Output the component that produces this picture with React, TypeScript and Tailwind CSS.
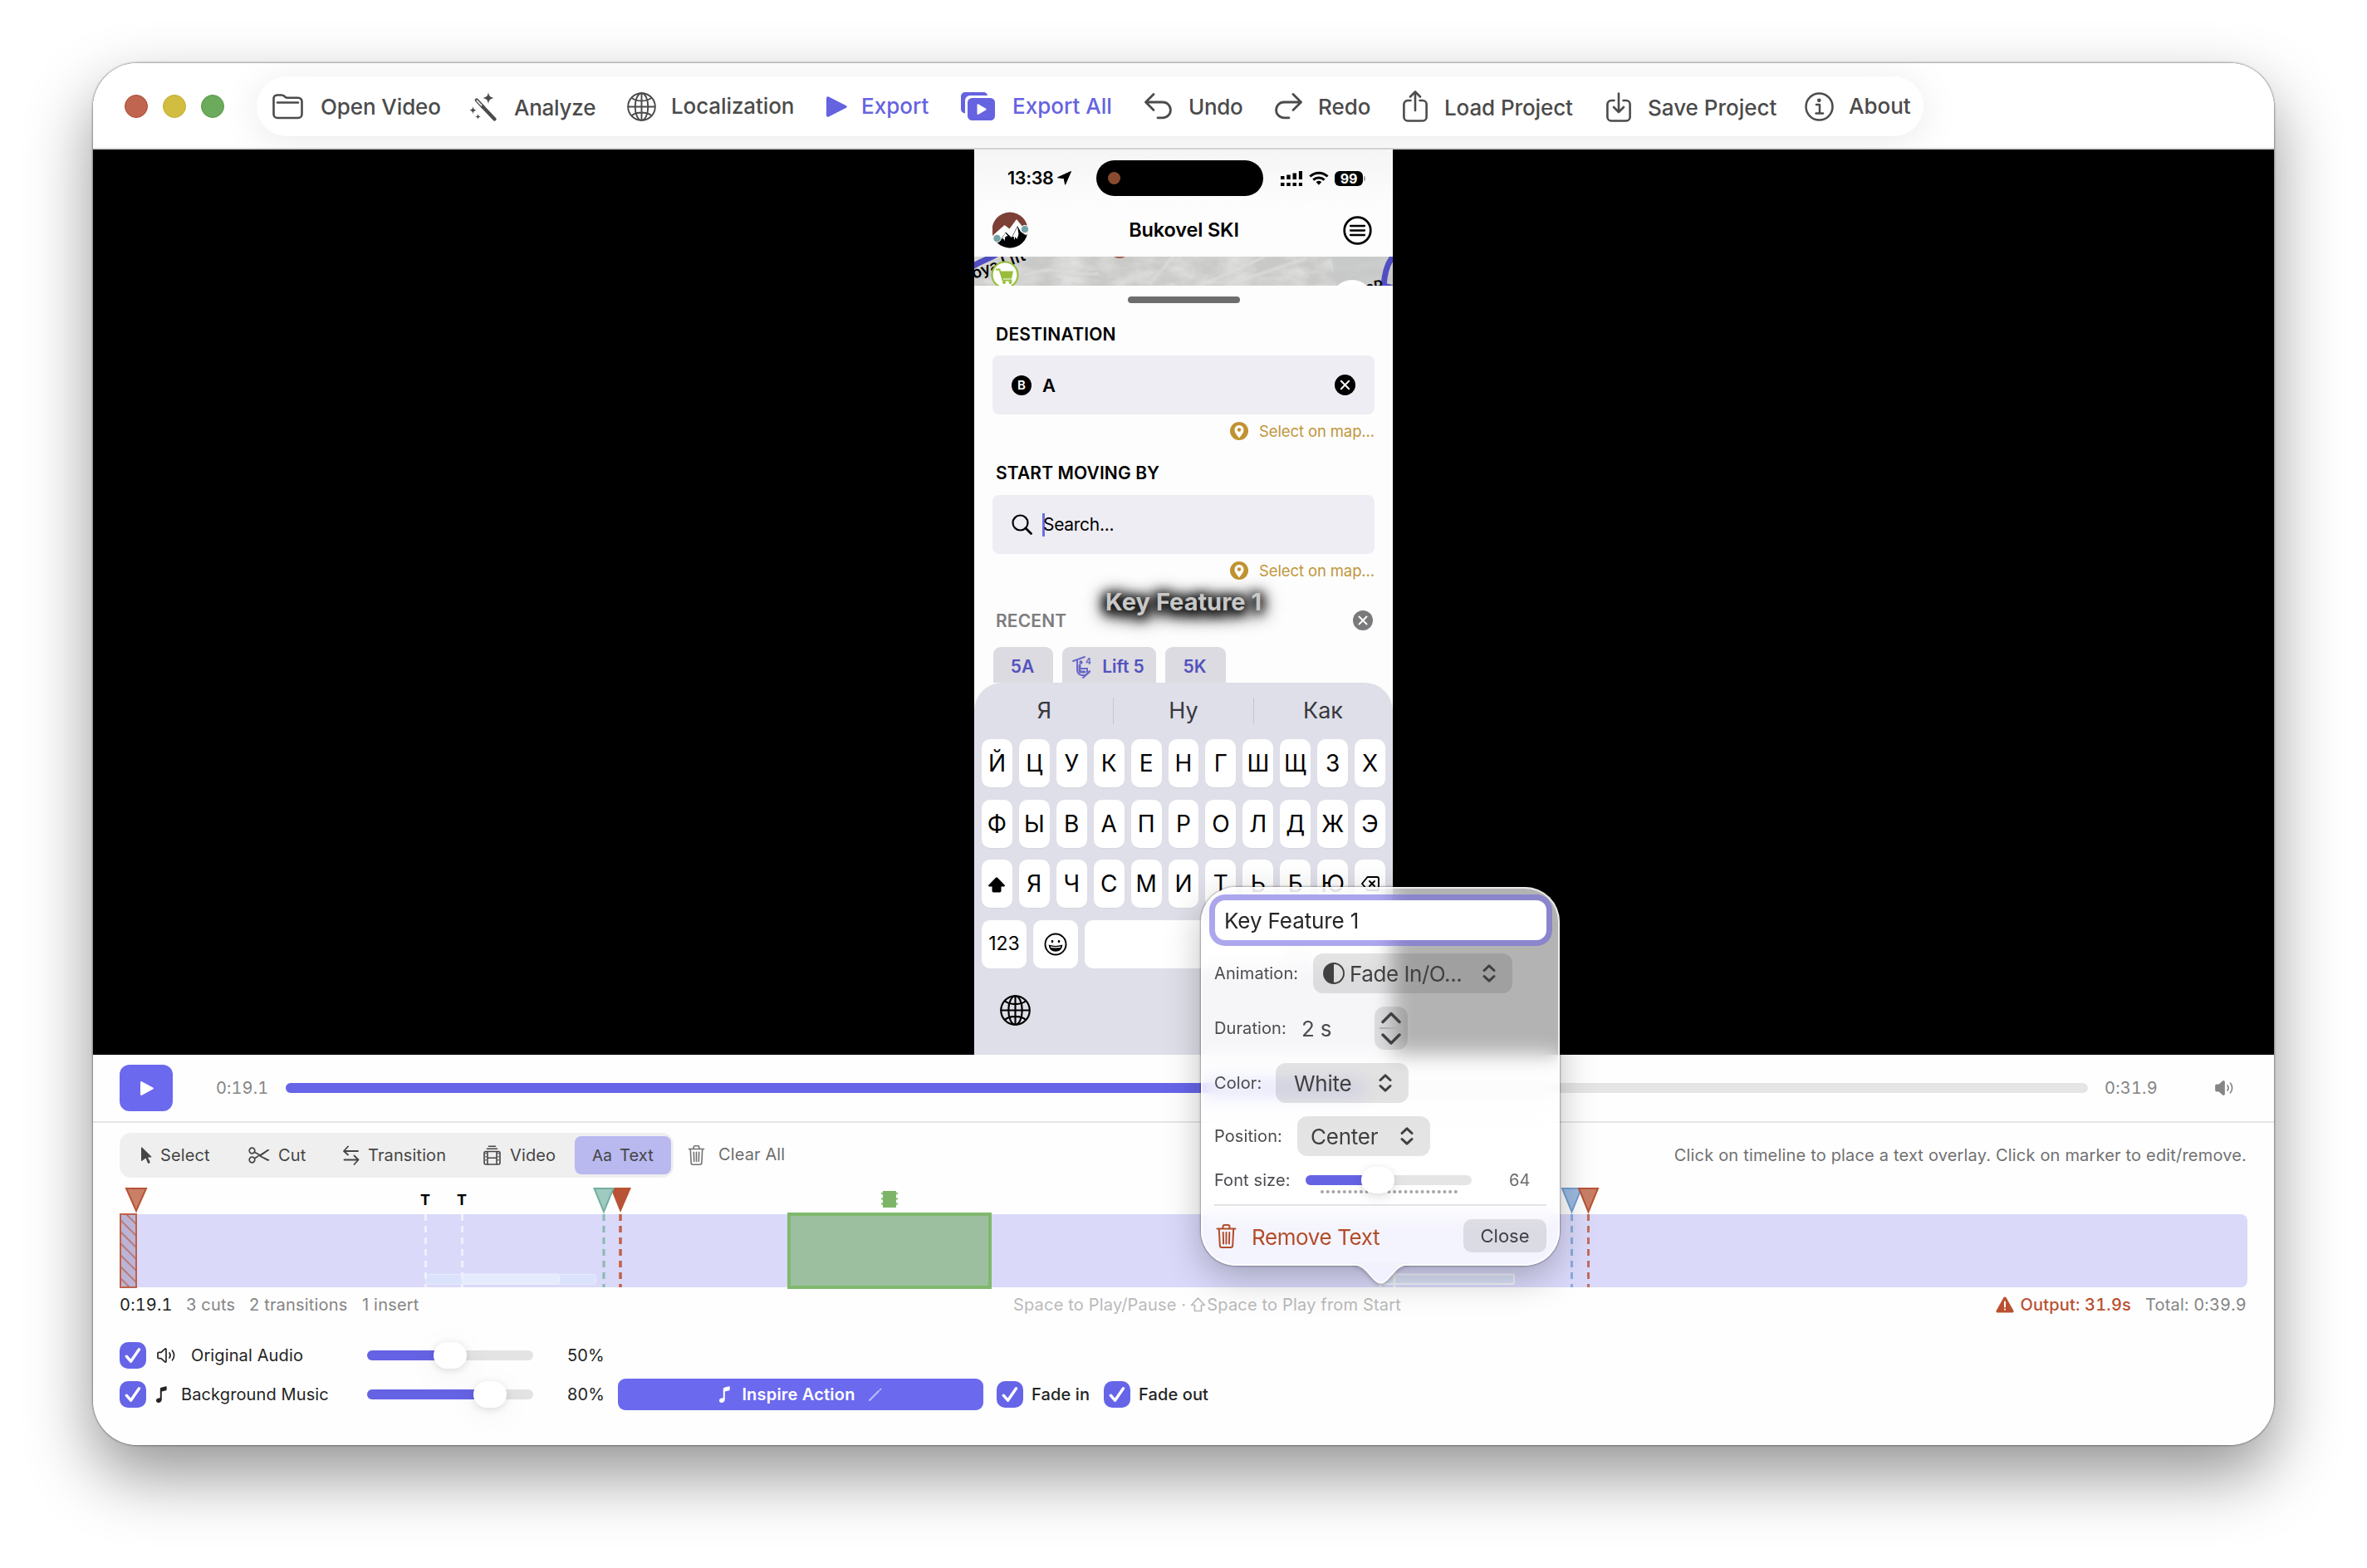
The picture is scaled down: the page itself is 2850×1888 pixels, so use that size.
import type { ReactNode } from "react";
import clsx from "clsx";

function Globe({ size, stroke }: { size: number; stroke: number }) {
    return (
        <svg width={size} height={size} viewBox="0 0 36 36" fill="none" stroke="currentColor" strokeWidth={stroke}>
            <circle cx="18" cy="18" r="16.8" />
            <ellipse cx="18" cy="18" rx="8" ry="16.8" />
            <path d="M18 1v34M1 18h34M5.5 6.8c3 2.6 7.5 4 12.5 4s9.5-1.4 12.5-4M5.5 29.2c3-2.6 7.5-4 12.5-4s9.5 1.4 12.5 4" />
        </svg>
    );
}

function FolderIcon() {
    return (
        <svg width="37" height="31" viewBox="0 0 37 31" fill="none" stroke="currentColor" strokeWidth="2.6" strokeLinecap="round" strokeLinejoin="round">
            <path d="M1.5 24.5V5.5a4 4 0 0 1 4-4h5.5c1.5 0 2.3.4 3.3 1.3l1 .9c.8.7 1.5 1 2.7 1h13a4.5 4.5 0 0 1 4.5 4.5v15.3a4.5 4.5 0 0 1-4.5 4.5H6a4.5 4.5 0 0 1-4.5-4.5z" />
            <path d="M6 10.5h25" />
        </svg>
    );
}

function WandIcon() {
    return (
        <svg width="34" height="35" viewBox="0 0 34 35" fill="currentColor">
            <path d="M23 0c.7 4.5 2 6 6.5 7-4.5 1-5.8 2.5-6.5 7-.7-4.5-2-6-6.5-7 4.5-1 5.8-2.5 6.5-7zM4.5 17c.4 3 1.3 4 4.3 4.7-3 .7-3.9 1.7-4.3 4.7-.4-3-1.3-4-4.3-4.7 3-.7 3.9-1.7 4.3-4.7zM10.5 26c.3 2.2 1 3 3.2 3.5-2.2.5-2.9 1.3-3.2 3.5-.3-2.2-1-3-3.2-3.5 2.2-.5 2.9-1.3 3.2-3.5z" />
            <path d="M8.8 9.5l8 8.5" fill="none" stroke="currentColor" strokeWidth="4.4" strokeLinecap="round" />
            <path d="M9.3 10.2l6.5 6.8" fill="none" stroke="#fff" strokeWidth="1.6" strokeLinecap="round" />
            <path d="M16.5 17.7l14 14.8" fill="none" stroke="currentColor" strokeWidth="4.2" strokeLinecap="round" />
        </svg>
    );
}

function PlayIcon({ w, h }: { w: number; h: number }) {
    return (
        <svg width={w} height={h} viewBox="0 0 25 24" fill="currentColor" preserveAspectRatio="none">
            <path d="M0 2.2C0 .6 1.4-.3 2.8.4L23.6 10.6c1.6.8 1.6 2 0 2.8L2.8 23.6C1.4 24.3 0 23.4 0 21.8z" />
        </svg>
    );
}

function ExportAllIcon() {
    return (
        <svg width="41" height="34" viewBox="0 0 41 34" fill="currentColor">
            <path d="M5 25.5a5 5 0 0 1-5-5V5a5 5 0 0 1 5-5h22a5 5 0 0 1 5 4H11a6 6 0 0 0-6 6z" />
            <rect x="8" y="7" width="33" height="27" rx="5.5" />
            <path d="M19.5 15.3c0-1 .8-1.4 1.6-.9l9 5.3c.8.5.8 1.2 0 1.7l-9 5.3c-.8.5-1.6.1-1.6-.9z" fill="#fff" />
        </svg>
    );
}

function UndoIcon({ flip }: { flip?: boolean }) {
    return (
        <svg width="33" height="32" viewBox="0 0 33 32" fill="none" stroke="currentColor" strokeWidth="2.8" strokeLinecap="round" strokeLinejoin="round" className={clsx(flip && "-scale-x-100")}>
            <path d="M11 1.5L1.5 11l9.5 9.5M2 11h20a9.2 9.2 0 0 1 0 18.8h-6" />
        </svg>
    );
}

function TrayIcon({ down }: { down?: boolean }) {
    return (
        <svg width="30" height="38" viewBox="0 0 30 38" fill="none" stroke="currentColor" strokeWidth="2.6" strokeLinecap="round" strokeLinejoin="round">
            <path d="M9.5 12H6a4.6 4.6 0 0 0-4.6 4.6V32A4.6 4.6 0 0 0 6 36.5h18a4.6 4.6 0 0 0 4.6-4.5V16.6A4.6 4.6 0 0 0 24 12h-3.5" />
            {down ? <path d="M15 3.5V26M9 20l6 6 6-6" /> : <path d="M15 24V1.5M9 7.5l6-6 6 6" />}
        </svg>
    );
}

function InfoIcon() {
    return (
        <svg width="35" height="35" viewBox="0 0 35 35" fill="none" stroke="currentColor" strokeWidth="2.5" strokeLinecap="round" strokeLinejoin="round">
            <circle cx="17.5" cy="17.5" r="16" />
            <path d="M14 15h4v10M13.5 25.5h8.5" />
            <circle cx="17.3" cy="9.8" r="1.1" fill="currentColor" />
        </svg>
    );
}

function Trash({ w, h, stroke }: { w: number; h: number; stroke: number }) {
    return (
        <svg width={w} height={h} viewBox="0 0 24 29" fill="none" stroke="currentColor" strokeWidth={stroke} strokeLinecap="round" strokeLinejoin="round">
            <path d="M1 5.5h22M8 5V3a2 2 0 0 1 2-2h4a2 2 0 0 1 2 2v2M3.3 6l1 19.5A2.5 2.5 0 0 0 6.8 28h10.4a2.5 2.5 0 0 0 2.5-2.5L20.7 6M8.2 10l.4 13.5M12 10v13.5M15.8 10l-.4 13.5" />
        </svg>
    );
}

function Speaker({ filled }: { filled?: boolean }) {
    return (
        <svg width="24" height="18" viewBox="0 0 24 18" fill="none" stroke="currentColor" strokeWidth="1.7" strokeLinecap="round" strokeLinejoin="round">
            <path d="M1 6.5a1.2 1.2 0 0 1 1.2-1.2H5L9.7 1.2c.6-.5 1.3-.2 1.3.6v14.4c0 .8-.7 1.1-1.3.6L5 12.7H2.2A1.2 1.2 0 0 1 1 11.5z" fill={filled ? "currentColor" : "none"} />
            <path d="M15 6c1.3 1.8 1.3 4.2 0 6M18.5 3.2c2.8 3.3 2.8 8.3 0 11.6" />
        </svg>
    );
}

function Note({ h }: { h: number }) {
    return (
        <svg width={(h * 13) / 20} height={h} viewBox="0 0 13 20" fill="currentColor">
            <path d="M4.8 3.2c0-.8.4-1.3 1.2-1.5L11.7.2c.6-.2 1 .1 1 .7v3.3c0 .6-.3.9-.9 1.1l-5 1.2v9.2c0 2.6-1.6 4.2-4 4.2C1.1 19.9 0 18.9 0 17.5c0-1.5 1-2.5 2.7-2.9l1.1-.2c.7-.2 1-.5 1-1.2z" />
        </svg>
    );
}

function Updown() {
    return (
        <svg width="16" height="22" viewBox="0 0 16 22" fill="none" stroke="currentColor" strokeWidth="3" strokeLinecap="round" strokeLinejoin="round">
            <path d="M2 7.5l6-5.7 6 5.7M2 14.5l6 5.7 6-5.7" />
        </svg>
    );
}

function CircleX({ size, color }: { size: number; color: string }) {
    return (
        <svg width={size} height={size} viewBox="0 0 24 24">
            <circle cx="12" cy="12" r="12" fill={color} />
            <path d="M7.5 7.5l9 9m0-9l-9 9" stroke="#fff" strokeWidth="1.9" strokeLinecap="round" />
        </svg>
    );
}

function Checkbox() {
    return (
        <span className="flex size-8 shrink-0 items-center justify-center rounded-[10px] bg-[#6665e8]">
            <svg width="20" height="20" viewBox="0 0 20 20" fill="none" stroke="#fff" strokeWidth="3.4" strokeLinecap="round" strokeLinejoin="round">
                <path d="M2.3 11.2l5.2 6L17.5 2.8" />
            </svg>
        </span>
    );
}

const toolbar: { label: string; w: string; slot: string; text: string; accent?: boolean; icon: ReactNode }[] = [
    { label: "Open Video", w: "w-[237px]", slot: "w-[58px]", text: "tracking-[-0.1px] pt-[2px]", icon: <FolderIcon /> },
    { label: "Analyze", w: "w-[190px]", slot: "w-[54px]", text: "tracking-[-0.25px] pt-[3px]", icon: <WandIcon /> },
    { label: "Localization", w: "w-[240px]", slot: "w-[53px]", text: "tracking-[-0.1px]", icon: <Globe size={35} stroke={2} /> },
    { label: "Export", w: "w-[162px]", slot: "w-[42px]", text: "", accent: true, icon: <PlayIcon w={25} h={25} /> },
    { label: "Export All", w: "w-[221px]", slot: "w-[62px]", text: "", accent: true, icon: <ExportAllIcon /> },
    { label: "Undo", w: "w-[157px]", slot: "w-[53px]", text: "tracking-[-0.3px] pt-[2px]", icon: <UndoIcon /> },
    { label: "Redo", w: "w-[154px]", slot: "w-[52px]", text: "pt-[2px]", icon: <UndoIcon flip /> },
    { label: "Load Project", w: "w-[245px]", slot: "w-[50px]", text: "tracking-[-0.1px] pt-[4px]", icon: <TrayIcon /> },
    { label: "Save Project", w: "w-[239px]", slot: "w-[50px]", text: "pt-[3px]", icon: <TrayIcon down /> },
    { label: "About", w: "w-[143px]", slot: "w-[53px]", text: "", icon: <InfoIcon /> },
];

function TitleBar() {
    return (
        <div className="flex h-[104px] shrink-0 items-center border-b-2 border-[#d9d9d9] bg-white pl-[38px]">
            <div className="mt-px flex gap-[18px]">
                <span className="size-7 rounded-full border border-[#ab4a35] bg-[#c0654f]" />
                <span className="size-7 rounded-full border border-[#c4ad2e] bg-[#d1bd40]" />
                <span className="size-7 rounded-full border border-[#559847] bg-[#6bab5b]" />
            </div>
            <div className="ml-[39px] mt-[2px] flex h-[72px] w-[2007px] items-center rounded-full bg-white pl-[19px] text-[26px] leading-none font-medium text-[#4b4b4b] shadow-[0_6px_48px_rgba(0,0,0,0.09)]">
                {toolbar.map((item) => (
                    <div key={item.label} className={clsx("flex shrink-0 items-center", item.w, item.accent && "text-[#6563e0]")}>
                        <span className={clsx("shrink-0", item.slot)}>{item.icon}</span>
                        <span className={clsx("whitespace-nowrap", item.text)}>{item.label}</span>
                    </div>
                ))}
            </div>
        </div>
    );
}

function StatusBar() {
    return (
        <div className="flex h-[70px] items-center pb-px pl-10 pr-[33px]">
            <span className="w-[60px] text-[21.5px] leading-none font-semibold tracking-[-0.3px]">13:38</span>
            <svg width="17" height="17" viewBox="0 0 17 17">
                <path d="M16.6.4L9.6 16.3 8.3 8.8.4 7.8z" fill="#000" stroke="#000" strokeLinejoin="round" />
            </svg>
            <div className="ml-[30px] flex h-[43px] w-[202px] items-center rounded-full bg-black pl-[14px]">
                <span className="size-[15px] rounded-full bg-[#8a4a2f]" />
            </div>
            <svg className="ml-[21px]" width="27" height="18" viewBox="0 0 27 18">
                <path d="M0 14h4.5v4H0zM7.3 14h4.5v4H7.3zM14.6 14h4.5v4h-4.5zM22 14h4.5v4H22zM0 6h4.5v4H0zM7.3 4.5h4.5V10H7.3zM14.6 2.5h4.5V10h-4.5zM22 0h4.5v10H22z" />
            </svg>
            <svg className="ml-2" width="24" height="17" viewBox="0 0 24 17" fill="none" stroke="#000" strokeWidth="3">
                <path d="M1.3 6.5a15.5 15.5 0 0 1 21.4 0M5.3 10.7a9.8 9.8 0 0 1 13.4 0" />
                <path d="M12 16.8l-3.3-3.5a5 5 0 0 1 6.6 0z" fill="#000" stroke="none" />
            </svg>
            <span className="ml-[7px] flex h-[18px] w-[34px] items-center justify-center rounded-md bg-black text-[16px] leading-none font-bold text-white">99</span>
            <span className="ml-px h-[6px] w-[2px] rounded-r bg-[#a5a5a5]" />
        </div>
    );
}

function AppLogo() {
    return (
        <svg width="44" height="44" viewBox="0 0 44 44">
            <defs>
                <clipPath id="logo"><circle cx="21" cy="22" r="21.5" /></clipPath>
            </defs>
            <g clipPath="url(#logo)">
                <rect width="44" height="44" fill="#7c4036" />
                <path d="M-2 34L2 27 14.5 16l6 4.5L29 9l8 10 9 2v26H-2z" fill="#fff" />
                <path d="M3 36l8-4 5-7.5L23 31l7-14 4 7 6 4 6-2v20H0z" fill="#000" />
                <path d="M11 33l4.5-7.5 3 3.5-3 1-1 5-1.5-3zM24 30l6-12 1.5 9-2 6-2-3-1 4-1-4z" fill="#fff" />
            </g>
            <circle cx="5.5" cy="32" r="4.7" fill="#74a3a7" stroke="#fff" />
            <circle cx="39" cy="21" r="4.7" fill="#74a3a7" stroke="#fff" />
        </svg>
    );
}

function MapStrip() {
    return (
        <svg width="504" height="43" viewBox="0 0 504 43" className="block">
            <defs>
                <filter id="terrain" x="0" y="0" width="100%" height="100%">
                    <feTurbulence type="fractalNoise" baseFrequency="0.03 0.06" numOctaves="4" seed="4" />
                    <feColorMatrix values="0 0 0 0 1  0 0 0 0 1  0 0 0 0 1  0.8 0 0 0 -0.25" />
                </filter>
            </defs>
            <rect width="504" height="43" fill="#c9cac8" />
            <rect width="504" height="43" filter="url(#terrain)" />
            <path d="M60 22c40-14 60 4 90-2M210 34l30-34M270 36L350 0M300 36L400 2" stroke="#dcdedb" strokeOpacity=".6" strokeWidth="4" fill="none" />
            <path d="M430 0h74v43h-66z" fill="#c6c8c7" opacity=".7" />
            <path d="M-2 12C8 5 18 3 27-3M506-2c-8 8-12 20-13 38M490 34l14 4" stroke="#524ec2" strokeWidth="7" fill="none" />
            <text x="-1" y="26" transform="rotate(-20 2 24)" fontSize="19" fontWeight="600">oya Lift</text>
            <text x="472" y="43" transform="rotate(-8 472 40)" fontSize="17" fontWeight="600">aP</text>
            <ellipse cx="175" cy="-1" rx="7" ry="3" fill="#a0564a" />
            <circle cx="37" cy="22" r="15.5" fill="#fff" stroke="#98bd3c" strokeWidth="2.2" />
            <path d="M26 15.5h4.5l4 13h11" fill="none" stroke="#98bd3c" strokeWidth="1.8" />
            <path d="M31 17.5h16l-2 9H34z" fill="#98bd3c" />
            <circle cx="36" cy="31" r="2" fill="#98bd3c" />
            <circle cx="43.5" cy="31" r="2" fill="#98bd3c" />
            <circle cx="455" cy="54" r="26" fill="#fff" />
        </svg>
    );
}

function SelectOnMap() {
    return (
        <div className="flex items-center justify-end pr-[22px] text-[#c0963a]">
            <svg width="22" height="22" viewBox="0 0 22 22">
                <circle cx="11" cy="11" r="11" fill="#c19231" />
                <path d="M11 19.5C8 15.5 5.5 13 5.5 9.5a5.5 5.5 0 0 1 11 0c0 3.5-2.5 6-5.5 10z" fill="#fff" />
                <circle cx="11" cy="9.5" r="2.2" fill="#c19231" />
            </svg>
            <span className="ml-[13px] w-[139px] whitespace-nowrap text-[18.5px] leading-none tracking-[-0.12px]">Select on map...</span>
        </div>
    );
}

const keyRows = ["ЙЦУКЕНГШЩЗХ", "ФЫВАПРОЛДЖЭ", "⇧ЯЧСМИТЬБЮ⌫"];

function KeyFace({ char }: { char: string }) {
    if (char === "⇧") {
        return (
            <svg width="22" height="19" viewBox="0 0 22 19" className="mt-[2px]">
                <path d="M10 .8a1.4 1.4 0 0 1 2 0l8.7 9c.7.8.3 1.7-.7 1.7h-3.5v5.3a1.7 1.7 0 0 1-1.7 1.7H7.2a1.7 1.7 0 0 1-1.7-1.7v-5.3H2c-1 0-1.4-.9-.7-1.7z" />
            </svg>
        );
    }
    if (char === "⌫") {
        return (
            <svg width="22" height="18" viewBox="0 0 22 18" fill="none" stroke="#000" strokeWidth="1.9" strokeLinecap="round" strokeLinejoin="round">
                <path d="M7.5 1H19a2 2 0 0 1 2 2v12a2 2 0 0 1-2 2H7.5L1 9zM10 6l6 6m0-6l-6 6" />
            </svg>
        );
    }
    return <>{char}</>;
}

function Keyboard() {
    return (
        <div className="flex flex-1 flex-col bg-[#fdfdfd]">
            <div className="flex flex-1 flex-col rounded-t-[34px] bg-[#dfdfe9] px-[9px]">
                <div className="flex h-[68px] items-center pb-px text-center text-[27px] leading-none text-[#38383d]">
                    <span className="w-[158px] pr-[7px]">Я</span>
                    <span className="h-8 w-px bg-[#c5c5cf]" />
                    <span className="w-[168px]">Ну</span>
                    <span className="h-8 w-px bg-[#c5c5cf]" />
                    <span className="w-[158px] pl-[8px]">Как</span>
                </div>
                <div className="flex flex-col gap-[14.5px]">
                    {keyRows.map((row) => (
                        <div key={row} className="grid grid-cols-11 gap-2">
                            {row.split("").map((char) => (
                                <span key={char} className="flex h-[58px] items-center justify-center rounded-[10px] bg-white text-[28px] leading-none shadow-[0_1px_1px_rgba(0,0,0,0.04)]">
                                    <KeyFace char={char} />
                                </span>
                            ))}
                        </div>
                    ))}
                    <div className="flex h-[58px] gap-2">
                        <span className="flex w-[54px] items-center justify-center rounded-[10px] bg-white text-[23px] leading-none">123</span>
                        <span className="flex w-[54px] items-center justify-center rounded-[10px] bg-white">
                            <svg width="28" height="28" viewBox="0 0 28 28" fill="none" stroke="#000" strokeWidth="1.9">
                                <circle cx="14" cy="14" r="12.5" />
                                <path d="M6.5 15.5c2.5.8 5 1.1 7.5 1.1s5-.3 7.5-1.1c-.5 4-3.5 6.5-7.5 6.5s-7-2.5-7.5-6.5z" fill="#000" strokeWidth="1.4" />
                                <path d="M8 17.2c4 1 8 1 12 0" stroke="#fff" strokeWidth="1.2" />
                                <ellipse cx="10" cy="10.5" rx="1.3" ry="1.8" fill="#000" stroke="none" />
                                <ellipse cx="18" cy="10.5" rx="1.3" ry="1.8" fill="#000" stroke="none" />
                            </svg>
                        </span>
                        <span className="flex-1 rounded-[10px] bg-white" />
                        <span className="w-[100px] rounded-[10px] bg-white" />
                    </div>
                </div>
                <div className="mt-[32px] pl-[22px]">
                    <Globe size={37} stroke={2.1} />
                </div>
            </div>
        </div>
    );
}

function Chip({ className, children }: { className: string; children: ReactNode }) {
    return (
        <span className={clsx("flex h-[50px] items-center justify-center rounded-[9px] bg-[#dcdbe1] pb-[3px] pr-[2px] text-[21px] leading-none font-semibold text-[#5452bd]", className)}>
            {children}
        </span>
    );
}

function Phone() {
    return (
        <div className="flex h-[1090px] w-[504px] flex-col overflow-hidden bg-[#fdfdfd] text-black">
            <div className="bg-linear-to-b from-[#f5f5f6] to-[#fdfdfd]">
                <StatusBar />
            </div>
            <div className="flex h-[59px] items-center justify-between pb-[5px] pl-[22px] pr-[25px]">
                <AppLogo />
                <span className="pr-[5px] text-[23.5px] leading-none font-semibold tracking-[-0.15px]">Bukovel SKI</span>
                <svg width="35" height="35" viewBox="0 0 35 35" fill="none" stroke="#000" strokeWidth="2.7" strokeLinecap="round">
                    <circle cx="17.5" cy="17.5" r="15.8" />
                    <path d="M9 12h17M9 17.5h17M9 23h17" strokeWidth="2.3" />
                </svg>
            </div>
            <div className="h-[35px] overflow-hidden">
                <MapStrip />
            </div>
            <div className="flex h-[478px] shrink-0 flex-col overflow-hidden bg-[#fdfdfd]">
                <span className="mx-auto mt-[13px] h-2 w-[135px] shrink-0 rounded-full bg-[#6d6d6d]" />
                <span className="ml-[26px] mt-[27px] text-[21px] leading-[21px] font-semibold tracking-[0.22px]">DESTINATION</span>
                <div className="ml-[22px] mt-[15px] flex h-[71px] w-[460px] shrink-0 items-center rounded-lg bg-[#eeedf3] px-[23px]">
                    <span className="flex size-6 items-center justify-center rounded-full bg-black text-[15px] leading-none font-semibold text-white">B</span>
                    <span className="ml-[13px] flex-1 text-[22px] leading-none font-semibold">A</span>
                    <CircleX size={25} color="#000" />
                </div>
                <div className="mt-[9px]"><SelectOnMap /></div>
                <span className="ml-[26px] mt-[29px] text-[21px] leading-[21px] font-semibold tracking-[0.12px]">START MOVING BY</span>
                <div className="ml-[22px] mt-[16px] flex h-[71px] w-[460px] shrink-0 items-center rounded-lg bg-[#eeedf3] pl-[23px]">
                    <svg width="25" height="25" viewBox="0 0 25 25" fill="none" stroke="#000" strokeWidth="2.2" strokeLinecap="round">
                        <circle cx="10.5" cy="10.5" r="9" />
                        <path d="M17 17l6.5 6.5" strokeWidth="2.8" />
                    </svg>
                    <span className="ml-[12px] h-7 w-[3px] bg-[#6c6ee8]" />
                    <span className="-ml-[2px] text-[21px] leading-none tracking-[-0.3px]">Search...</span>
                </div>
                <div className="mt-[9px]"><SelectOnMap /></div>
                <div className="relative mt-[37px] flex items-center justify-between pl-[26px] pr-6">
                    <span className="text-[21px] leading-none font-semibold tracking-[0.15px] text-[#7d7d80]">RECENT</span>
                    <CircleX size={24} color="#7a7a7d" />
                    {/* caption burned into the frame, with a heavy halo behind the glyphs */}
                    <span className="absolute -top-[25px] left-0 w-full text-center text-[29px] leading-none font-bold text-[#c8c8c8] [text-shadow:0_2px_14px_#000,0_2px_14px_#000,0_3px_18px_#000,0_3px_22px_#000,0_4px_26px_rgba(0,0,0,0.9)]">
                        Key Feature 1
                    </span>
                </div>
                <div className="mt-[20px] flex gap-[11px] pl-[23px]">
                    <Chip className="w-[72px]">5A</Chip>
                    <Chip className="w-[113px] gap-[13px]">
                        <svg width="23" height="28" viewBox="0 0 23 28" fill="none" stroke="#6a69c8" strokeWidth="2" strokeLinecap="round">
                            <path d="M1 7l14-5M6 6v12a6 6 0 0 0 5 6h5l5-5M13 27l8-7M11 16h7v4" />
                            <path d="M9 12v8h6" strokeWidth="3" />
                            <circle cx="10.5" cy="8.5" r="1.2" fill="#6a69c8" />
                            <text x="16" y="11" fontSize="10" fontWeight="700" fill="#6a69c8" stroke="none">4</text>
                        </svg>
                        Lift 5
                    </Chip>
                    <Chip className="w-[73px]">5K</Chip>
                </div>
            </div>
            <Keyboard />
        </div>
    );
}

function Transport() {
    return (
        <div className="flex h-[82px] shrink-0 items-center border-b-2 border-[#e5e5e5] pl-8 text-[20px] leading-none tabular-nums text-[#858585]">
            <button className="flex h-14 w-16 items-center justify-center rounded-xl bg-[#6b69ee] pl-px text-white">
                <PlayIcon w={16} h={17} />
            </button>
            <span className="ml-[52px] w-[84px] tracking-[0.1px]">0:19.1</span>
            <div className="h-3 w-[2170px] rounded-full bg-[#e5e5e5]">
                <div className="h-3 w-[1299px] rounded-l-full bg-[#6665e8]" />
            </div>
            <span className="ml-[20px] w-[133px] tracking-[0.2px]">0:31.9</span>
            <Speaker filled />
        </div>
    );
}

function Tool({ w, slot, label, active, icon }: { w: string; slot: string; label: string; active?: boolean; icon: ReactNode }) {
    return (
        <span className={clsx("flex h-[46px] items-center rounded-lg", w, active && "bg-[#b9b8ef] pl-[21px]")}>
            <span className={clsx("shrink-0", slot)}>{icon}</span>
            <span>{label}</span>
        </span>
    );
}

function Tools() {
    return (
        <div className="mt-3 flex h-[54px] shrink-0 items-center pl-8 pr-[33px] text-[20px] leading-none tracking-[0.12px] text-[#454545]">
            <div className="flex h-[54px] w-[667px] items-center rounded-[14px] bg-[#efefef] pl-[26px]">
                <Tool w="w-[129px]" slot="w-[23px]" label="Select" icon={
                    <svg width="13" height="20" viewBox="0 0 13 20" fill="currentColor">
                        <path d="M0 .8C0 .2.6 0 1 .4l11.2 11c.5.5.2 1.2-.5 1.2H8l2.7 5.7c.2.5 0 .8-.4 1l-1.2.5c-.5.2-.9 0-1.1-.4L5.5 13.5 1 16.7c-.5.4-1 .1-1-.5z" />
                    </svg>
                } />
                <Tool w="w-[114px]" slot="w-[36px]" label="Cut" icon={
                    <svg width="26" height="20" viewBox="0 0 26 20" fill="none" stroke="currentColor" strokeWidth="1.7">
                        <circle cx="4.5" cy="4.5" r="3.3" />
                        <circle cx="4.5" cy="15.5" r="3.3" />
                        <path d="M7.5 6.3l7 4M7.5 13.7l4.5-2.6" />
                        <path d="M11 11l11.5-7.5c1.3-.8 2.6-.5 3 .3L14.5 11.5zM13.5 9.8l12 5.7c-.5 1.2-1.9 1.5-3 1L12.5 11z" fill="currentColor" stroke="none" />
                    </svg>
                } />
                <Tool w="w-[169px]" slot="w-[30px]" label="Transition" icon={
                    <svg width="20" height="24" viewBox="0 0 20 24" fill="none" stroke="currentColor" strokeWidth="1.8" strokeLinecap="round" strokeLinejoin="round">
                        <path d="M18 7H1.5M6 1.5L1 7l5 4.5M1.5 17.5H18M13.5 12.5l5 5-5 5.5" />
                    </svg>
                } />
                <Tool w="w-[110px]" slot="w-[32px]" label="Video" icon={
                    <svg width="21" height="24" viewBox="0 0 21 24" fill="none" stroke="currentColor" strokeWidth="1.6" strokeLinecap="round">
                        <path d="M6.5 1.2h8M4.5 4.3h12" />
                        <rect x="1" y="7.5" width="19" height="15.5" rx="2" />
                        <path d="M5 8v14.5M16 8v14.5M5 15.2h11" />
                        <path d="M3 9.5v12M18 9.5v12" strokeDasharray="0.5 3.5" strokeWidth="1.4" />
                    </svg>
                } />
                <Tool w="w-[116px]" slot="w-[33px] text-[19px]" label="Text" active icon="Aa" />
            </div>
            <span className="ml-[17px] w-[37px] text-[#717171]"><Trash w={21} h={24} stroke={1.9} /></span>
            <span className="-mt-[2px] text-[#6e6e6e]">Clear All</span>
            <span className="ml-auto tracking-[0.18px] text-[#717171]">Click on timeline to place a text overlay. Click on marker to edit/remove.</span>
        </div>
    );
}

const cuts = [
    { x: 727, stroke: "#74b09e", fill: "#9fcabf" },
    { x: 1892.5, stroke: "#74a0d4", fill: "#9dbbe0" },
    { x: 1912.5, stroke: "#b85335", fill: "#c97f68" },
];

function Timeline() {
    return (
        <svg className="ml-8 mt-2.5 block shrink-0" width="2570" height="126" viewBox="144 1428 2570 126">
            <rect x="144" y="1462" width="2562" height="88" rx="8" fill="#dad9fa" />
            <rect x="145" y="1462" width="19" height="88" fill="#806f93" fillOpacity=".35" />
            <path d="M152 1462l12 12M145 1469l19 19M145 1483l19 19M145 1497l19 19M145 1511l19 19M145 1525l19 19M145 1539l11 11" stroke="#b85335" strokeOpacity=".6" strokeWidth="1.8" />
            <rect x="145" y="1462" width="19" height="88" fill="none" stroke="#bd6249" strokeWidth="2" />
            <path d="M152 1431h24l-12 27z" fill="#c97f68" stroke="#b85335" strokeWidth="2" />

            <rect x="512.5" y="1534.5" width="205" height="12" rx="3" fill="#dbe2fb" stroke="#e8ecfc" />
            <rect x="556.5" y="1534" width="117" height="12" rx="3" fill="#e4ebfc" stroke="#edf1fd" />
            <rect x="1661" y="1534.5" width="162" height="11.5" rx="2" fill="#dbe3f8" stroke="#f3f4fd" strokeWidth="2" />
            <path d="M1679 1530v20M1662 1530v20" stroke="#f0f1f6" strokeWidth="3" />
            {[512, 556].map((x) => (
                <g key={x}>
                    <path d={`M${x + 0.5} 1462v88`} stroke="#f0effd" strokeWidth="3" strokeDasharray="8 6" />
                    <text x={x} y="1451" textAnchor="middle" fontSize="18" fontWeight="700">T</text>
                </g>
            ))}

            <path d="M735 1430h25l-13 30z" fill="#b85335" />
            <path d="M747 1462v88" stroke="#c0604a" strokeWidth="3.5" strokeDasharray="8 6" />
            {cuts.map((c) => (
                <g key={c.x}>
                    <path d={`M${c.x - 11.5} 1431h23l-11.5 28z`} fill={c.fill} stroke={c.stroke} strokeWidth="2" />
                    <path d={`M${c.x} 1462v88`} stroke={c.stroke} strokeOpacity=".8" strokeWidth="3" strokeDasharray="8 6" />
                </g>
            ))}

            <rect x="1063" y="1434" width="16" height="20" fill="#7db568" />
            <path d="M1061 1437h20M1061 1443.5h20M1061 1449.5h20" stroke="#7db568" strokeOpacity=".8" strokeWidth="2.5" />
            <rect x="950" y="1462" width="242" height="88" fill="#9cc09f" stroke="#7fb86d" strokeWidth="4" />
        </svg>
    );
}

function Status() {
    return (
        <div className="grid h-[33px] shrink-0 grid-cols-[1fr_auto_1fr] items-center pl-8 pr-[33px] text-[20px] leading-none tracking-[0.18px] text-[#858585]">
            <div className="flex">
                <span className="w-[80px] tabular-nums text-[#1f1f1f]">0:19.1</span>
                <span className="w-[76px]">3 cuts</span>
                <span className="w-[136px]">2 transitions</span>
                <span>1 insert</span>
            </div>
            <div className="flex items-center pl-[58px] text-[#bababa]">
                <span>Space to Play/Pause ·</span>
                <svg className="ml-[5px] mr-px" width="19" height="18" viewBox="0 0 19 18" fill="none" stroke="currentColor" strokeWidth="1.7" strokeLinejoin="round">
                    <path d="M9.5 1L17.5 9.5h-4V16.5h-8V9.5h-4z" />
                </svg>
                <span>Space to Play from Start</span>
            </div>
            <div className="flex items-center justify-end">
                <svg width="22" height="20" viewBox="0 0 22 20">
                    <path d="M9.5 1.2a1.8 1.8 0 0 1 3 0l8.8 15.7c.8 1.4 0 2.6-1.5 2.6H2.2C.7 19.5-.1 18.3.7 16.9z" fill="#b95030" />
                    <path d="M11 6.5v6M11 15.5v.3" stroke="#fff" strokeWidth="2" strokeLinecap="round" />
                </svg>
                <span className="ml-[8px] mr-[17px] font-medium tabular-nums text-[#b95030]">Output: 31.9s</span>
                <span className="tabular-nums tracking-[0.2px]">Total: 0:39.9</span>
            </div>
        </div>
    );
}

function VolumeSlider({ value }: { value: number }) {
    return (
        <span className="relative block h-3 w-[200px] rounded-full bg-[#e3e3e3]">
            <span className="block h-3 rounded-l-full bg-[#6563e4]" style={{ width: value * 160 + 20 }} />
            <span className="absolute -top-2.5 h-8 w-10 rounded-full bg-white shadow-[0_2px_10px_rgba(0,0,0,0.12),0_8px_40px_rgba(0,0,0,0.06)]" style={{ left: value * 160 }} />
        </span>
    );
}

function AudioMix() {
    return (
        <div className="mt-[21px] flex flex-col pl-8 text-[20px] leading-none tracking-[0.12px] text-[#242424]">
            <div className="flex h-[47px] items-center">
                <Checkbox />
                <span className="ml-[13px] w-[41px]"><Speaker /></span>
                <span className="w-[212px]">Original Audio</span>
                <VolumeSlider value={0.5} />
                <span className="ml-[41px]">50%</span>
            </div>
            <div className="flex h-[47px] items-center">
                <Checkbox />
                <span className="ml-3 w-[30px]"><Note h={20} /></span>
                <span className="w-[224px]">Background Music</span>
                <VolumeSlider value={0.8} />
                <span className="ml-[41px] w-[61px]">80%</span>
                <button className="flex h-[38px] w-[440px] items-center justify-center rounded-[9px] bg-[#6b69ee] font-semibold text-white">
                    <Note h={20} />
                    <span className="ml-[14px] mr-[16px] tracking-[0.2px]">Inspire Action</span>
                    <svg width="16" height="16" viewBox="0 0 16 16" fill="none" stroke="#fff" strokeOpacity=".55" strokeWidth="2" strokeLinecap="round">
                        <path d="M1 15l11-11M13.8 2.2l.6-.6" />
                    </svg>
                </button>
                <span className="ml-4"><Checkbox /></span>
                <span className="ml-[10px] w-[87px] font-medium">Fade in</span>
                <Checkbox />
                <span className="ml-[10px] font-medium">Fade out</span>
            </div>
        </div>
    );
}

function Picker({ className, children }: { className: string; children: ReactNode }) {
    return (
        <span className={clsx("flex h-12 items-center justify-between rounded-[12px] bg-black/[0.105] text-[26px] leading-none tracking-[-0.25px] text-[#404040]", className)}>
            {children}
            <Updown />
        </span>
    );
}

function TextPopover() {
    return (
        <div className="absolute left-[1334px] top-[992px] w-[432px]">
            <div className="flex h-[456px] flex-col gap-4 rounded-[42px] bg-white/70 px-4 py-4 text-[20px] leading-none tracking-[0.1px] text-[#4c4c50] shadow-[0_0_2px_1px_rgba(0,0,0,0.3),0_14px_44px_rgba(0,0,0,0.25),inset_0_0_0_2px_rgba(255,255,255,0.75)] backdrop-blur-[12px]">
                <div className="ml-px flex h-12 shrink-0 items-center rounded-[12px] bg-white pl-[11px] pt-[2px] text-[26px] tracking-[-0.1px] text-[#262626] ring-[7px] ring-[#6a5fe0]/55">Key Feature 1</div>
                <div className="flex items-center">
                    <span className="w-[119px]">Animation:</span>
                    <Picker className="w-[240px] pl-3 pr-[20px]">
                        <span className="flex items-center">
                            <svg width="26" height="26" viewBox="0 0 26 26" className="mr-[6px]">
                                <circle cx="13" cy="13" r="12" fill="none" stroke="currentColor" strokeWidth="1.9" />
                                <path d="M13 1a12 12 0 0 0 0 24z" fill="currentColor" />
                            </svg>
                            <span className="pt-[2px] tracking-[-0.45px]">Fade In/O...</span>
                        </span>
                    </Picker>
                </div>
                <div className="flex items-center">
                    <span className="w-[105px]">Duration:</span>
                    <span className="w-[88px] pt-px text-[26px] tracking-[-0.2px]">2 s</span>
                    <span className="flex h-[52px] w-10 flex-col items-center justify-center rounded-[12px] bg-black/10">
                        <svg width="28" height="40" viewBox="0 0 28 40" fill="none" stroke="#404040" strokeWidth="3.4" strokeLinecap="round" strokeLinejoin="round">
                            <path d="M4 12.5L14 2.5l10 10M4 28L14 38l10-10" />
                            <path d="M0 20h28" stroke="#b0b0b0" strokeWidth="1.8" />
                        </svg>
                    </span>
                </div>
                <div className="flex items-center">
                    <span className="w-[74px]">Color:</span>
                    <Picker className="w-40 pl-[22px] pr-[20px]"><span className="pt-[2px]">White</span></Picker>
                </div>
                <div className="flex items-center">
                    <span className="w-[100px]">Position:</span>
                    <Picker className="w-40 pl-4 pr-[20px]"><span className="pt-[2px]">Center</span></Picker>
                </div>
                <div className="flex h-[26px] items-center">
                    <span className="w-[110px]">Font size:</span>
                    <span className="relative block h-3 w-[200px] rounded-full bg-black/10">
                        <span className="block h-3 w-[80px] rounded-l-full bg-[#6563e4]" />
                        <svg className="absolute left-[17px] top-[17px]" width="166" height="6" viewBox="0 0 166 6">
                            <path d="M3 3h161" stroke="#a6a6aa" strokeWidth="4" strokeLinecap="round" strokeDasharray="0 6.7" />
                        </svg>
                        <span className="absolute -top-2.5 left-[67px] h-8 w-10 rounded-full bg-white shadow-[0_3px_12px_rgba(0,0,0,0.15)]" />
                    </span>
                    <span className="ml-[45px] text-[#6c6c70]">64</span>
                </div>
                <div className="h-[2px] shrink-0 bg-black/10" />
                <div className="flex h-10 items-center text-[#b24d2b]">
                    <span className="ml-[2px] w-[43px]"><Trash w={25} h={29} stroke={2} /></span>
                    <span className="pt-[3px] text-[26px] tracking-[-0.4px]">Remove Text</span>
                    <button className="ml-auto h-10 w-[100px] rounded-[10px] bg-black/10 text-[22px] leading-none tracking-normal text-[#3f3f44]">Close</button>
                </div>
            </div>
            <svg className="absolute left-[182px] top-[454px] drop-shadow-[0_2px_2px_rgba(0,0,0,0.25)]" width="70" height="28" viewBox="0 0 70 28">
                <path d="M2 1c8 0 11 3 15 7l10 11c5 5 10 5 15 0L52 8c4-4 7-7 15-7z" fill="#f2f1fe" />
                <path d="M2 1c8 0 11 3 15 7l10 11c5 5 10 5 15 0L52 8c4-4 7-7 15-7" fill="none" stroke="#fff" strokeWidth="1.5" />
            </svg>
        </div>
    );
}

export default function App() {
    return (
        <div className="h-[1888px] w-[2850px] overflow-hidden bg-white pl-[112px] pt-[76px] font-['Inter','Liberation_Sans',sans-serif]">
            <div className="h-[1664px] w-[2626px] rounded-[54px] shadow-[0_0_2px_1px_rgba(0,0,0,0.35),0_36px_80px_rgba(0,0,0,0.42)]">
                <div className="relative flex h-full flex-col overflow-hidden rounded-[54px] bg-[#fefefe]">
                    <TitleBar />
                    <div className="flex h-[1090px] shrink-0 justify-center bg-black">
                        <Phone />
                    </div>
                    <Transport />
                    <Tools />
                    <Timeline />
                    <Status />
                    <AudioMix />
                    <TextPopover />
                </div>
            </div>
        </div>
    );
}
